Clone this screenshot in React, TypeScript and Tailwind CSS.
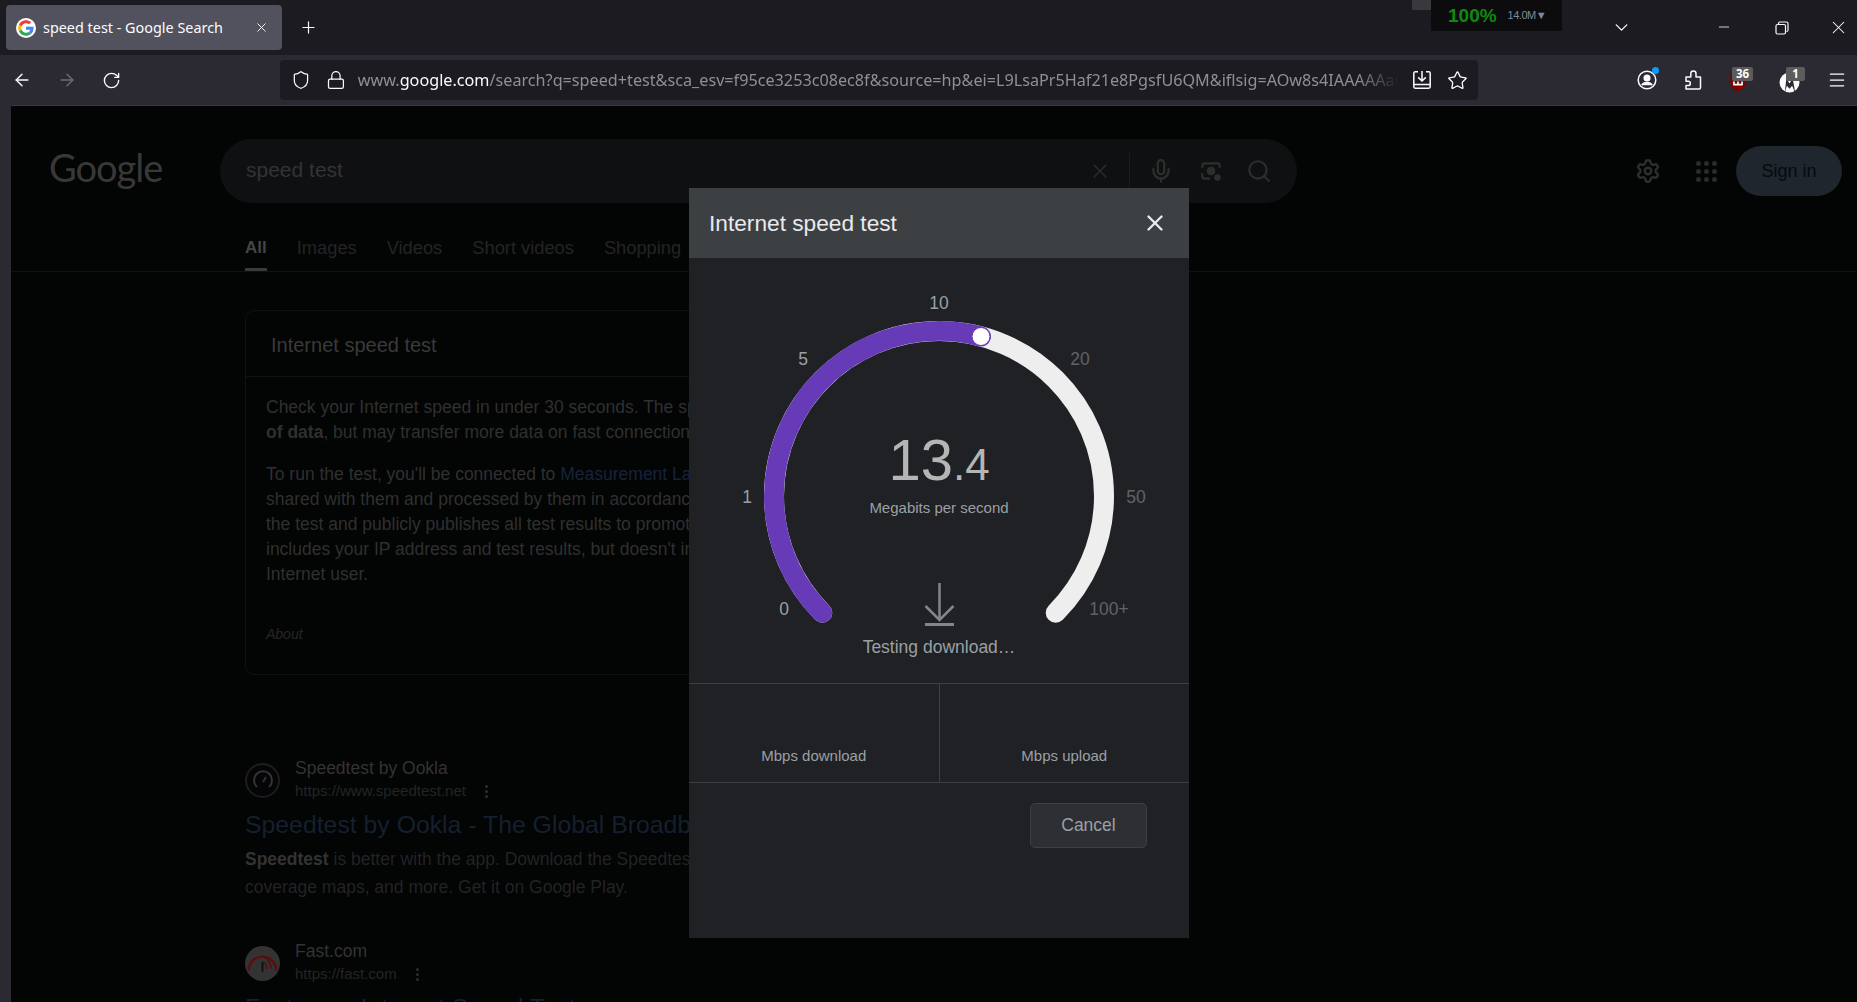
import React from 'react';
import {
  ArrowLeft,
  ArrowRight,
  ChevronDown,
  Lock,
  Menu,
  Mic,
  Minus,
  Plus,
  RotateCw,
  Search,
  Settings,
  Shield,
  Star,
  X,
} from 'lucide-react';

const GoogleG = () => (
  <svg viewBox="0 0 48 48" className="h-5 w-5 rounded-full bg-white p-[2px]">
    <path fill="#EA4335" d="M24 9.5c3.5 0 6.7 1.2 9.2 3.6l6.9-6.9C35.9 2.4 30.5 0 24 0 14.6 0 6.5 5.4 2.6 13.2l8 6.2C12.5 13.7 17.8 9.5 24 9.5z" />
    <path fill="#4285F4" d="M46.9 24.5c0-1.6-.1-3.1-.4-4.5H24v9h12.9c-.6 3-2.2 5.5-4.8 7.2l7.7 6c4.5-4.2 7.1-10.3 7.1-17.7z" />
    <path fill="#FBBC05" d="M10.5 28.6c-.5-1.4-.8-3-.8-4.6s.3-3.2.8-4.6l-8-6.2C.9 16.5 0 20.1 0 24s.9 7.5 2.6 10.8l7.9-6.2z" />
    <path fill="#34A853" d="M24 48c6.5 0 11.9-2.1 15.9-5.8l-7.7-6c-2.2 1.4-4.9 2.3-8.2 2.3-6.2 0-11.5-4.2-13.4-9.9l-8 6.2C6.5 42.6 14.6 48 24 48z" />
  </svg>
);

const TrayDownload = () => (
  <svg viewBox="0 0 20 20" className="h-5 w-5" fill="none" stroke="#fbfbfe" strokeWidth="1.5">
    <path d="M6 1.8H3.2a1.4 1.4 0 0 0-1.4 1.4v13.6a1.4 1.4 0 0 0 1.4 1.4h13.6a1.4 1.4 0 0 0 1.4-1.4V3.2a1.4 1.4 0 0 0-1.4-1.4H14" />
    <path d="M10 1v9M6.2 7.4 10 11l3.8-3.6M2 14.5h16" />
  </svg>
);

const Profile = () => (
  <div className="relative h-5 w-5">
    <svg viewBox="0 0 20 20" className="h-5 w-5" fill="none" stroke="#fbfbfe" strokeWidth="1.5">
      <circle cx="10" cy="10" r="8.8" />
      <circle cx="10" cy="8" r="2.8" fill="#fbfbfe" />
      <path d="M4.8 15.2c1-2 3-2.8 5.2-2.8s4.2.8 5.2 2.8" fill="#fbfbfe" />
    </svg>
    <span className="absolute -right-[2px] -top-[3px] h-[7px] w-[7px] rounded-full bg-[#0a9dff]" />
  </div>
);

const ExtensionsPuzzle = () => (
  <svg viewBox="0 0 20 20" className="h-5 w-5" fill="none" stroke="#fbfbfe" strokeWidth="1.5" strokeLinejoin="round">
    <path d="M3 19h13.2a1.3 1.3 0 0 0 1.3-1.3V7H13V3.700a2.600 2.600 0 0 0-5.200 0V7H3v4.300h2.200a2.100 2.100 0 0 1 0 4.200H3z" />
  </svg>
);

const UBlock = () => (
  <div className="relative h-[26px] w-[24px]">
    <svg viewBox="0 0 20 24" className="absolute left-0 top-[3px] h-[23px] w-[18px]">
      <path d="M10 1 1.500 3v10c0 4.500 4 8 8.500 10 4.500-2 8.500-5.500 8.500-10V3z" fill="#800000" />
      <path d="M5.500 12v3.500h9V12M10 12v3.500" stroke="#fff" strokeWidth="1.800" fill="none" />
    </svg>
    <span className="absolute left-[3px] top-0 w-[21px] rounded-[2px] bg-[#5c5c5c] text-center font-['Open_Sans',sans-serif] text-[11.500px] font-bold leading-[14px] text-white">
      36
    </span>
  </div>
);

const Malwarebytes = () => (
  <div className="relative h-[26px] w-[26px]">
    <svg viewBox="0 0 20 20" className="absolute left-0 top-[5px] h-[21px] w-[21px]">
      <circle cx="10" cy="10" r="9.500" fill="#fbfbfe" />
      <path d="M5.500 20 7 6l3 5 3-5 2.500 14L12.500 13 10 16l-2.500-3z" fill="#2b2a33" />
      <path d="M15 0h5v6zM0 0h3L0 4z" fill="#2b2a33" />
    </svg>
    <span className="absolute left-[7px] top-0 w-[19px] rounded-[2px] bg-[#5c5c5c] text-center font-['Open_Sans',sans-serif] text-[11.500px] font-bold leading-[14px] text-white">
      1
    </span>
  </div>
);

const BrowserChrome = () => (
  <div className="shrink-0 font-['Noto_Sans',sans-serif]">
    {/* Tab strip */}
    <div className="relative flex h-[55px] items-start bg-[#1c1b22] pl-[6px] pt-[5px]">
      <div className="flex h-[45px] w-[276px] items-center rounded-[4px] bg-[#52525e] pl-[10px] pr-[13px] text-[#fbfbfe]">
        <GoogleG />
        <span className="ml-[7px] flex-1 text-[14.400px]">speed test - Google Search</span>
        <X className="h-[15px] w-[15px]" strokeWidth={1.500} />
      </div>
      <Plus className="ml-[17px] mt-[13px] h-[19px] w-[19px] text-[#fbfbfe]" strokeWidth={1.500} />

      <div className="-mt-[5px] ml-auto flex items-start">
        <div className="h-[10px] w-[19px] bg-[#38383d]" />
        <div className="flex h-[31px] w-[131px] items-center bg-[#0c0c0e] pl-[17px]">
          <span className="font-['Liberation_Sans',sans-serif] text-[19px] font-bold leading-none text-[#0f8a0f]">100%</span>
          <span className="ml-[11px] font-['Liberation_Sans',sans-serif] text-[11px] leading-none tracking-[-0.5px] text-[#7e8a99]">14.0M▼</span>
        </div>
        <ChevronDown className="ml-[49px] mt-[17px] h-[21px] w-[21px] text-[#fbfbfe]" strokeWidth={1.500} />
        <Minus className="ml-[84px] mt-[19px] h-[16px] w-[16px] text-[#fbfbfe]" strokeWidth={1.200} />
        <svg viewBox="0 0 14 14" className="ml-[43px] mt-[21px] h-[14px] w-[14px]" fill="none" stroke="#fbfbfe" strokeWidth="1.200">
          <rect x="1" y="3.500" width="9.500" height="9.500" rx="1.500" />
          <path d="M3.500 3.500V2.500A1.500 1.500 0 0 1 5 1h6.500A1.500 1.500 0 0 1 13 2.500V9a1.500 1.500 0 0 1-1.500 1.500" />
        </svg>
        <X className="ml-[39px] mr-[8px] mt-[17px] h-[21px] w-[21px] text-[#fbfbfe]" strokeWidth={1.200} />
      </div>
    </div>

    {/* Navigation toolbar */}
    <div className="flex h-[50px] items-center bg-[#2b2a33] text-[#fbfbfe]">
      <ArrowLeft className="ml-[12px] h-[20px] w-[20px]" strokeWidth={1.700} />
      <ArrowRight className="ml-[25px] h-[20px] w-[20px] text-[#6e6d75]" strokeWidth={1.700} />
      <RotateCw className="ml-[25px] h-[19px] w-[19px]" strokeWidth={1.700} />

      <div className="ml-[159px] flex h-[40px] w-[1198px] items-center rounded-[4px] bg-[#1c1b22] pl-[11px] pr-[10px]">
        <Shield className="h-[20px] w-[20px]" strokeWidth={1.500} />
        <Lock className="ml-[15px] h-[20px] w-[20px]" strokeWidth={1.500} />
        <div className="ml-[12px] w-[1047px] overflow-hidden whitespace-nowrap text-[16.200px] text-[#8f8f94] [mask-image:linear-gradient(to_right,black_96%,transparent)]">
          www.<span className="text-[#fbfbfe]">google.com</span>/search?q=speed+test&amp;sca_esv=f95ce3253c08ec8f&amp;source=hp&amp;ei=L9LsaPr5Haf21e8PgsfU6QM&amp;iflsig=AOw8s4IAAAAAaOzj
        </div>
        <div className="ml-[13px]">
          <TrayDownload />
        </div>
        <Star className="ml-[15px] h-[21px] w-[21px]" strokeWidth={1.500} />
      </div>

      <div className="ml-auto flex items-center pr-[10px]">
        <Profile />
        <div className="ml-[26px]">
          <ExtensionsPuzzle />
        </div>
        <div className="ml-[26px]">
          <UBlock />
        </div>
        <div className="ml-[26px]">
          <Malwarebytes />
        </div>
        <Menu className="ml-[22px] h-[20px] w-[20px]" strokeWidth={1.500} />
      </div>
    </div>
  </div>
);

const VerticalDots = () => (
  <span className="flex flex-col gap-[2px]">
    <span className="h-[3px] w-[3px] rounded-full bg-[#2e2e2e]" />
    <span className="h-[3px] w-[3px] rounded-full bg-[#2e2e2e]" />
    <span className="h-[3px] w-[3px] rounded-full bg-[#2e2e2e]" />
  </span>
);

const AppsGrid = () => (
  <div className="grid grid-cols-3 gap-[3px]">
    {Array.from({ length: 9 }).map((_, i) => (
      <span key={i} className="h-[5px] w-[5px] rounded-full bg-[#2b2b2b]" />
    ))}
  </div>
);

const GoogleBackground = () => (
  <div className="h-full overflow-hidden font-['Liberation_Sans',sans-serif] text-[#2f3030]">
    {/* Search header */}
    <div className="mt-[33px] flex h-[64px] items-center pl-[38px] pr-[15px]">
      <div className="-mt-[8px] w-[171px] font-['Lato',sans-serif] text-[38px] leading-none tracking-[-1px] text-[#383838]">Google</div>
      <div className="flex h-[64px] w-[1077px] items-center rounded-[32px] bg-[#0f1011] pl-[26px] pr-[25px]">
        <span className="-mt-[2px] flex-1 text-[21px] text-[#333435]">speed test</span>
        <X className="h-[24px] w-[24px] text-[#2b2b2b]" strokeWidth={1.500} />
        <div className="ml-[17px] mr-[18px] h-[36px] w-px bg-[#1c1c1e]" />
        <Mic className="h-[26px] w-[26px] text-[#2e2e2e]" />
        <svg viewBox="0 0 24 24" className="ml-[24px] h-[26px] w-[26px]" fill="none" stroke="#2e2e2e" strokeWidth="2">
          <path d="M4 9V7a2 2 0 0 1 2-2h12a2 2 0 0 1 2 2v2M4 14v3a2 2 0 0 0 2 2h5" />
          <circle cx="12" cy="12" r="3" fill="#2e2e2e" />
          <circle cx="18" cy="18" r="2" fill="#2e2e2e" />
        </svg>
        <Search className="ml-[22px] h-[26px] w-[26px] text-[#2e2e2e]" />
      </div>
      <Settings className="ml-auto h-[26px] w-[26px] text-[#2e2e2e]" strokeWidth={2.200} />
      <div className="ml-[35px]">
        <AppsGrid />
      </div>
      <div className="ml-[19px] flex h-[50px] w-[106px] items-center justify-center rounded-[25px] bg-[#20262d] text-[18px] text-[#060a0e]">Sign in</div>
    </div>

    {/* Result type tabs */}
    <div className="flex h-[69px] items-end gap-[30px] border-b border-[#101111] pl-[234px] text-[18.300px] text-[#232425]">
      <div className="border-b-[3px] border-[#3a3a3a] pb-[8px] text-[17px] font-bold text-[#444]">All</div>
      <div className="pb-[10px]">Images</div>
      <div className="pb-[10px]">Videos</div>
      <div className="pb-[10px]">Short videos</div>
      <div className="pb-[10px]">Shopping</div>
    </div>

    <div className="ml-[234px] mt-[38px] w-[760px]">
      {/* Speed test card */}
      <div className="h-[365px] rounded-[10px] border border-[#101111]">
        <div className="flex h-[66px] items-center border-b border-[#101111] pl-[25px] pt-[2px] text-[20px] text-[#3a3a3a]">Internet speed test</div>
        <div className="whitespace-nowrap px-[20px] pt-[18px] text-[17.500px] leading-[25px]">
          <p>Check your Internet speed in under 30 seconds. The speed test usually transfers less than 40 MB</p>
          <p>
            <b>of data</b>, but may transfer more data on fast connections.
          </p>
          <p className="mt-[17px]">
            To run the test, you'll be connected to <span className="text-[#18233a]">Measurement Lab</span> and your IP address will be
          </p>
          <p>shared with them and processed by them in accordance with their privacy policy. M-Lab conducts</p>
          <p>the test and publicly publishes all test results to promote Internet research. Published information</p>
          <p>includes your IP address and test results, but doesn't include any other information about you as an</p>
          <p>Internet user.</p>
          <p className="mt-[35px] text-[14px] italic text-[#262626]">About</p>
        </div>
      </div>

      {/* Organic results */}
      <div className="mt-[82px]">
        <div className="flex items-center">
          <div className="flex h-[35px] w-[35px] items-center justify-center rounded-full border-2 border-[#1d1d1f] bg-[#050507]">
            <svg viewBox="0 0 24 24" className="h-[24px] w-[24px]" fill="none" stroke="#333" strokeWidth="2">
              <path d="M6 19a9 9 0 1 1 12 0M12 14l3-5" />
            </svg>
          </div>
          <div className="ml-[15px]">
            <div className="text-[17.500px] leading-[22px] text-[#333]">Speedtest by Ookla</div>
            <div className="flex items-center gap-[19px] text-[15px] leading-[24px] text-[#232425]">
              https://www.speedtest.net
              <VerticalDots />
            </div>
          </div>
        </div>
        <div className="mt-[6px] whitespace-nowrap text-[24.800px] leading-[32px] text-[#15202f]">Speedtest by Ookla - The Global Broadband Speed Test</div>
        <div className="mt-[4px] whitespace-nowrap text-[17.500px] leading-[28px] text-[#222324]">
          <b className="text-[#333]">Speedtest</b> is better with the app. Download the Speedtest app for more tests,
          <br />
          coverage maps, and more. Get it on Google Play.
        </div>
      </div>

      <div className="mt-[39px]">
        <div className="flex items-center">
          <div className="flex h-[35px] w-[35px] items-center justify-center rounded-full bg-[#333]">
            <svg viewBox="0 0 24 24" className="h-[33px] w-[33px]" fill="none" stroke="#5e0c0c" strokeWidth="1.800">
              <path d="M2 17a10 10 0 0 1 20 0" />
              <path d="M12 7a8 8 0 0 1 6 9M12 11a4 4 0 0 1 3 5" stroke="#4a1414" strokeWidth="1.300" />
              <path d="M12 11v7" stroke="#111" strokeWidth="1.500" />
            </svg>
          </div>
          <div className="ml-[15px]">
            <div className="text-[17.500px] leading-[22px] text-[#333]">Fast.com</div>
            <div className="flex items-center gap-[19px] text-[15px] leading-[24px] text-[#232425]">
              https://fast.com
              <VerticalDots />
            </div>
          </div>
        </div>
        <div className="mt-[6px] whitespace-nowrap text-[24.800px] leading-[32px] text-[#15202f]">Fast.com: Internet Speed Test</div>
      </div>
    </div>
  </div>
);

const Gauge = () => (
  <svg viewBox="0 0 500 425" className="h-[425px] w-full font-['Liberation_Sans',sans-serif]" textAnchor="middle">
    <path d="M133.300 354.700 A165 165 0 1 1 366.700 354.700" fill="none" stroke="#eeeeee" strokeWidth="20" strokeLinecap="round" />
    <path d="M133.300 354.700 A165 165 0 0 1 292 78.500" fill="none" stroke="#673ab7" strokeWidth="20" strokeLinecap="round" />
    <circle cx="292" cy="78.500" r="9" fill="#ffffff" stroke="#673ab7" />

    <g fontSize="17.500" fill="#9aa0a6">
      <text x="250" y="51">10</text>
      <text x="114" y="107">5</text>
      <text x="58" y="245">1</text>
      <text x="95" y="357">0</text>
    </g>
    <g fontSize="17.500" fill="#5f6368">
      <text x="391" y="107">20</text>
      <text x="447" y="245">50</text>
      <text x="420" y="357">100+</text>
    </g>

    <text x="250" y="222" fill="#b5b5b5">
      <tspan fontSize="58">13</tspan>
      <tspan fontSize="44">.4</tspan>
    </text>
    <text x="250" y="255" fontSize="15" fill="#9aa0a6">
      Megabits per second
    </text>

    <path d="M250.500 325v37M236.500 348l14 14 14-14" fill="none" stroke="#80868b" strokeWidth="2.500" />
    <rect x="236" y="365" width="29" height="3" fill="#80868b" />
    <text x="250" y="395" fontSize="17.500" fill="#9aa0a6">
      Testing download…
    </text>
  </svg>
);

const SpeedTestDialog = () => (
  <div className="absolute left-[678px] top-[82px] flex h-[750px] w-[500px] flex-col bg-[#202124] font-['Liberation_Sans',sans-serif]">
    <div className="flex h-[70px] shrink-0 items-center justify-between bg-[#3c4043] pl-[20px] pr-[21px]">
      <span className="pt-[1px] text-[22.700px] text-[#e8eaed]">Internet speed test</span>
      <X className="-mt-[1px] h-[26px] w-[26px] text-[#e8eaed]" strokeWidth={2.200} />
    </div>
    <Gauge />
    <div className="flex h-[100px] border-y border-[#3c4043]">
      <div className="flex flex-1 items-end justify-center border-r border-[#3c4043] pb-[15px] text-[15px] text-[#9aa0a6]">Mbps download</div>
      <div className="flex flex-1 items-end justify-center pb-[15px] text-[15px] text-[#9aa0a6]">Mbps upload</div>
    </div>
    <div className="flex justify-end pr-[42px] pt-[20px]">
      <div className="flex h-[45px] w-[117px] items-center justify-center rounded-[5px] border border-[#3c4043] bg-[#2e2f32] text-[17.500px] text-[#9aa0a6]">Cancel</div>
    </div>
  </div>
);

export default function App() {
  return (
    <div className="flex h-[1002px] w-[1857px] flex-col overflow-hidden bg-[#2b2a33]">
      <BrowserChrome />
      <div className="relative ml-[11px] flex-1 overflow-hidden border-t border-[#3a3a3f] bg-[#030404]">
        <GoogleBackground />
        <SpeedTestDialog />
      </div>
    </div>
  );
}
